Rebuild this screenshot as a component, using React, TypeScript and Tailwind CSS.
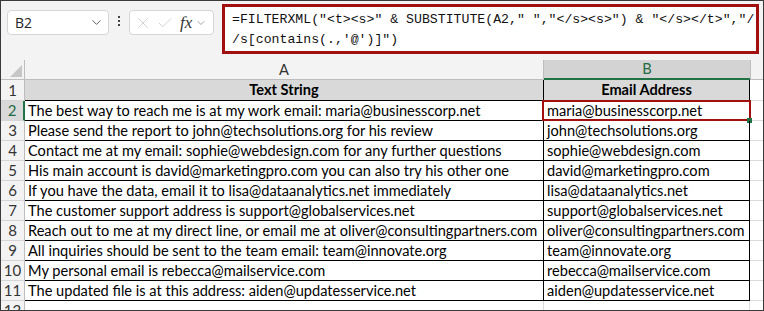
import { ChevronDown, X, Check } from "lucide-react";

const rows: [string, string][] = [
  ["The best way to reach me is at my work email: maria@businesscorp.net", "maria@businesscorp.net"],
  ["Please send the report to john@techsolutions.org for his review", "john@techsolutions.org"],
  ["Contact me at my email: sophie@webdesign.com for any further questions", "sophie@webdesign.com"],
  ["His main account is david@marketingpro.com you can also try his other one", "david@marketingpro.com"],
  ["If you have the data, email it to lisa@dataanalytics.net immediately", "lisa@dataanalytics.net"],
  ["The customer support address is support@globalservices.net", "support@globalservices.net"],
  ["Reach out to me at my direct line, or email me at oliver@consultingpartners.com", "oliver@consultingpartners.com"],
  ["All inquiries should be sent to the team email: team@innovate.org", "team@innovate.org"],
  ["My personal email is rebecca@mailservice.com", "rebecca@mailservice.com"],
  ["The updated file is at this address: aiden@updatesservice.net", "aiden@updatesservice.net"],
];

const cellFont = "font-['Lato','Liberation_Sans',sans-serif] text-[14.6px]";

function RowHead({ n, active }: { n: number; active?: boolean }) {
  return (
    <div
      className={
        "w-[24px] shrink-0 flex items-center justify-center border-b border-[#d5d5d5] text-[15px] " +
        (active
          ? "bg-[#d9d9d9] text-[#1f6b45] border-r-2 border-r-[#217346]"
          : "bg-[#f3f3f3] text-[#333] border-r border-r-[#bdbdbd]")
      }
    >
      {n}
    </div>
  );
}

export default function App() {
  return (
    <div className="w-[764px] h-[311px] overflow-hidden border border-[#3a3a3a] bg-white font-['Liberation_Sans',sans-serif]">
      {/* formula bar */}
      <div className="h-[59px] bg-[#f3f3f3] flex items-start pl-[6px] pt-[2px]">
        <div className="mt-[7px] w-[102px] h-[25px] bg-white border border-[#d6d6d6] rounded-[4px] flex items-center justify-between pl-[7px] pr-[4px] text-[14px] text-[#222] font-['Open_Sans',sans-serif]">
          <span>B2</span>
          <ChevronDown size={15} strokeWidth={1.5} className="text-[#555]" />
        </div>
        <div className="mt-[13px] ml-[9px] mr-[9px] flex flex-col gap-[2px] items-center">
          <span className="w-[2px] h-[2px] bg-[#444]" />
          <span className="w-[2px] h-[2px] bg-[#444]" />
          <span className="w-[2px] h-[2px] bg-[#444]" />
        </div>
        <div className="mt-[7px] w-[85px] h-[25px] bg-white border border-[#d6d6d6] rounded-[4px] flex items-center pl-[4px] gap-[4px]">
          <X size={18} strokeWidth={1} className="text-[#c4c4c4]" />
          <Check size={18} strokeWidth={1} className="text-[#c4c4c4]" />
          <span className="font-['Liberation_Serif',serif] italic text-[17px] text-[#333] ml-[2px] leading-none">fx</span>
          <ChevronDown size={12} strokeWidth={1.5} className="text-[#888] -ml-[1px]" />
        </div>
        <div className="ml-[8px] mt-[1px] w-[537px] h-[50px] border-[3px] border-[#a10f0f] bg-white pl-[7px] pt-[3px] font-['Liberation_Mono',monospace] text-[13.2px] leading-[20px] text-[#111] whitespace-pre">
          {'=FILTERXML("<t><s>" & SUBSTITUTE(A2," ","</s><s>") & "</s></t>","/\n/s[contains(.,\'@\')]")'}
        </div>
      </div>
      {/* sheet */}
      <div className={cellFont}>
        {/* column headers */}
        <div className="flex h-[20px]">
          <div className="w-[24px] shrink-0 bg-[#f3f3f3] border-r border-b border-[#bdbdbd] relative">
            <div className="absolute right-[2px] bottom-[2px] w-0 h-0 border-l-[12px] border-l-transparent border-b-[12px] border-b-[#c6c6c6]" />
          </div>
          <div className="w-[519px] shrink-0 bg-[#f3f3f3] border-r border-b border-[#bdbdbd] flex items-center justify-center text-[#333]">A</div>
          <div className="w-[206px] shrink-0 bg-[#d3d3d3] border-b-2 border-b-[#217346] flex items-center justify-center text-[#1f6b45]">B</div>
          <div className="flex-1 bg-[#f3f3f3] border-b border-[#bdbdbd] border-l border-l-[#bdbdbd]" />
        </div>
        {/* header row 1 */}
        <div className="flex h-[21px]">
          <RowHead n={1} />
          <div className="w-[519px] shrink-0 bg-[#d9d9d9] border-r border-b border-black flex items-center justify-center font-bold">Text String</div>
          <div className="w-[206px] shrink-0 bg-[#d9d9d9] border-r border-b border-black flex items-center justify-center font-bold">Email Address</div>
          <div className="flex-1 border-b border-[#dcdcdc]" />
        </div>
        {rows.map(([text, email], i) => (
          <div key={i} className="flex h-[20px]">
            <RowHead n={i + 2} active={i === 0} />
            <div className="w-[519px] shrink-0 border-r border-b border-black flex items-center pl-[3px] whitespace-nowrap overflow-hidden">{text}</div>
            <div className="w-[206px] shrink-0 border-r border-b border-black flex items-center pl-[3px] whitespace-nowrap relative">
              {i === 0 && (
                <>
                  <div className="absolute -left-[2px] -top-[1px] w-[209px] h-[21px] border-2 border-[#a10f0f]" />
                  <div className="absolute -right-[3px] -bottom-[3px] w-[5px] h-[5px] bg-[#217346]" />
                </>
              )}
              {email}
            </div>
            <div className="flex-1 border-b border-[#dcdcdc]" />
          </div>
        ))}
        <div className="flex h-[20px]">
          <RowHead n={12} />
          <div className="w-[519px] shrink-0 border-r border-b border-[#dcdcdc]" />
          <div className="w-[206px] shrink-0 border-r border-b border-[#dcdcdc]" />
          <div className="flex-1" />
        </div>
      </div>
    </div>
  );
}
